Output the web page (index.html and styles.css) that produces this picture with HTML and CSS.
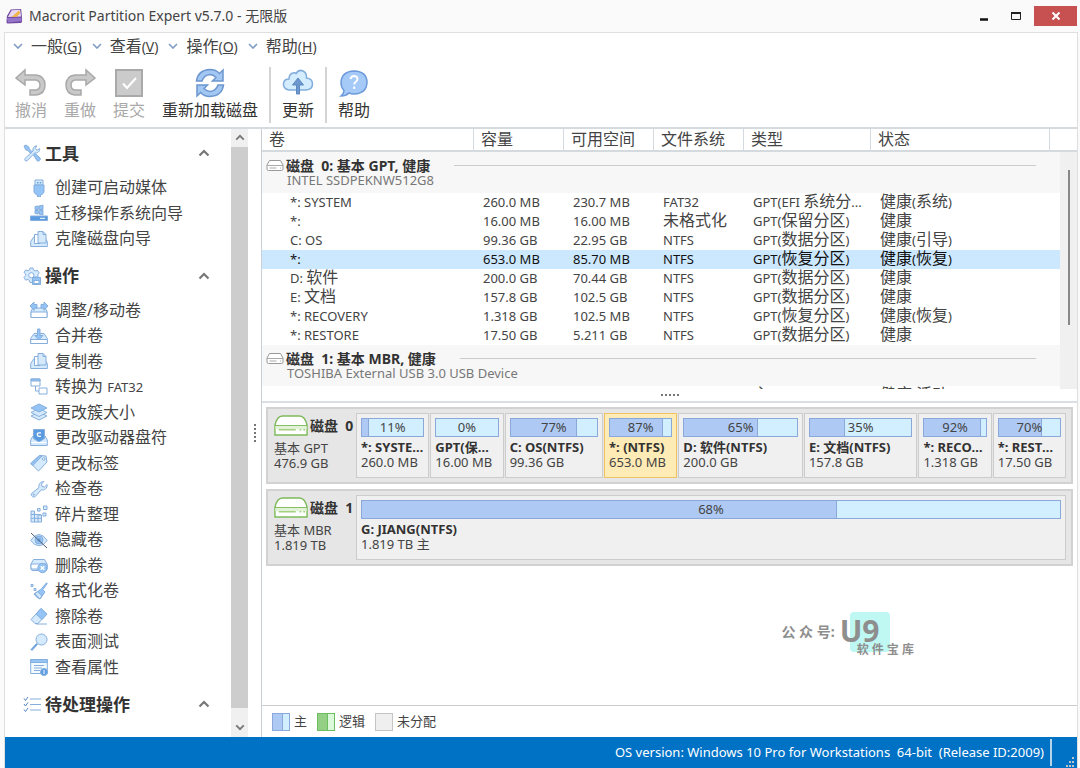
FILE: index.html
```
<!DOCTYPE html>
<html lang="zh-CN">

<head>
	<meta charset="UTF-8">
	<meta name="viewport" content="width=device-width, initial-scale=1.0">
	<title>Macrorit Partition Expert v5.7.0 - 无限版</title>
	<link rel="stylesheet" href="styles.css">
</head>

<body>
	<!-- icon sprite -->
	<svg class="sprite" aria-hidden="true">
		<symbol id="down" viewBox="0 0 10 6"><path d="M1 1l4 4 4-4" fill="none" stroke="currentColor" stroke-width="1.6"/></symbol>
		<symbol id="up" viewBox="0 0 12 8"><path d="M1.5 6.5L6 2l4.5 4.5" fill="none" stroke="currentColor" stroke-width="2.2"/></symbol>
		<symbol id="tools" viewBox="0 0 18 18">
			<path d="M2 14.5L10 7c-.6-2.400.8-5 3.800-5.200l-1.600 2.600 1.800 1.800 2.700-1.500c.2 3-2.400 4.800-5 4.200l-7.500 7.800c-1.800.9-3-.5-2.200-2.200z"/>
			<path class="mid" d="M1 2l2-1 3 2.200.2 1.600 3 3-1.600 1.500-3-3-1.600-.2zM10.500 11l1.600-1.500 5 4.500c1 1.800-1.300 3.900-3 2.800z"/>
		</symbol>
		<symbol id="gear" viewBox="0 0 18 18">
			<path d="M7 1h3l.6 2.200 1.500.8 2.200-.8 1.900 2.700-1.300 1.800.1 2.300H11l-.5 5.300-3.500.2-.6-2.100-1.500-.9-2.300.6L1 10.400l1.600-1.800-.1-1.600L1 5.600 2.600 3l2.300.7L6.400 3z"/>
			<circle cx="8.300" cy="8.300" r="2.600" fill="#fff"/>
			<path class="mid" d="M9.500 10.500h8v7h-8z"/><path d="M11 13.500h5v3h-5z" fill="#fff"/>
		</symbol>
		<symbol id="todo" viewBox="0 0 18 18">
			<path class="line" d="M7 4h11M7 9.500h11M7 15h11"/>
			<path d="M1 3.500L2.500 5.500 5 2M1 9l1.500 2L5 7.500M1 14.500l1.500 2L5 13" fill="none" stroke="#4f84c4"/>
		</symbol>
		<symbol id="usb" viewBox="0 0 18 18">
			<path d="M5 1h8v5H5z"/><path class="dark" d="M7 3h1.500v1.500H7zM9.700 3h1.500v1.500H9.700z" stroke="none"/>
			<path class="mid" d="M4 6h10v7q-1 2.500-3.500 3.200V18h-3v-1.800Q5 15.500 4 13z"/>
		</symbol>
		<symbol id="migrate" viewBox="0 0 18 18">
			<path class="mid" d="M5 2.500l3.300-.5v3.500H5zM9.300 1.800L13 1.200v4.300H9.300zM5 6.500h3.300V10L5 9.500zM9.300 6.500H13v4.300l-3.700-.6z"/>
			<path class="dark" d="M.5 12h17v4.500H.5z"/><path d="M10 14.300h5" stroke="#fff"/>
		</symbol>
		<symbol id="copy" viewBox="0 0 18 18">
			<path d="M.7 16.500v-5L4 6.500h10l3.300 5v5z"/>
			<path d="M4.500 4.500h5.500v9H4.500z" fill="#fff"/>
			<path d="M8 1.500h5l3 3v8.500H8z"/><path class="line" d="M13 1.500v3h3"/>
		</symbol>
		<symbol id="resize" viewBox="0 0 18 18">
			<path d="M1 16.500V10l2-3h12l2 3v6.500z"/><path d="M1 11h16v5.500H1z" fill="#fff"/>
			<path class="mid" d="M0 5l4-4v2.500h3V7H4v2.500zM18 5l-4-4v2.500h-3V7h3v2.500z"/>
		</symbol>
		<symbol id="merge" viewBox="0 0 18 18">
			<path d="M.7 16.500v-5L4 6.500h10l3.300 5v5z"/><path d="M.7 12.500h16.600v4H.7z" fill="#fff"/>
			<path class="mid" d="M7.500 2h2.500v6.500h3L8.800 13 4.500 8.500h3z"/>
		</symbol>
		<symbol id="convert" viewBox="0 0 18 18">
			<path d="M1 1h9v7H1z" fill="#fff"/><path class="mid" d="M1 1h9v2H1z"/>
			<path class="line" d="M5.500 8v5H9"/><path d="M9 10h8v6H9z" fill="#fff"/>
		</symbol>
		<symbol id="layers" viewBox="0 0 18 18">
			<path d="M1 13l8-4 8 4-8 4z"/><path d="M1 9.500l8-4 8 4-8 4z"/>
			<path class="mid" d="M1 5l8-4 8 4-8 4z"/>
		</symbol>
		<symbol id="letter" viewBox="0 0 18 18">
			<path d="M.7 16.500V11L3 7h12l2.300 4v5.500z"/><path class="dark" d="M3.500.5h11v9L9 13 3.500 9.500z"/>
			<path d="M11 3.800H9q-1.700 0-1.700 1.700T9 7.300h2" fill="none" stroke="#fff" stroke-width="1.300"/>
			<path d="M1 13.500h16" stroke="#fff"/>
		</symbol>
		<symbol id="tag" viewBox="0 0 18 18">
			<path d="M9.500 1.500l6.500.5 1 6-8.500 9L.8 9.500z"/><path class="mid" d="M9.500 1.500L.8 9.500l2 2L12 2z"/>
			<circle cx="13.700" cy="5" r="1.300" fill="#fff"/>
		</symbol>
		<symbol id="wrench" viewBox="0 0 18 18">
			<path d="M1.500 13.500L9 7.500c-.7-3 1.300-6 4.800-6L11.500 4l.5 2.500 2.500.5 2.600-2.500c.5 3.500-2.600 6.200-5.800 5.300l-6.300 7c-2.300 1-4.600-1.300-3.500-3.300z"/>
			<circle cx="3.700" cy="14.600" r=".7" fill="#fff"/>
		</symbol>
		<symbol id="defrag" viewBox="0 0 18 18">
			<path d="M1 6h3.500v3.500H8V10h3.500v7H1zM1 9.500h10M1 13.300h10.500M4.500 7v10M8 9v8"/>
			<path d="M7.500 3.500h2.600v2.600H7.500zM13.500 1h3.500v3.500h-3.500zM13 8h3v3h-3z"/>
		</symbol>
		<symbol id="hide" viewBox="0 0 18 18">
			<path d="M.7 9.500Q9-2.500 17.300 9.500 9 20 .7 9.500z"/><circle class="mid" cx="9" cy="9" r="4"/>
			<circle class="dark" cx="9" cy="9" r="1.500"/>
			<path d="M1 2l16 15" stroke="#4b5d78"/>
		</symbol>
		<symbol id="delete" viewBox="0 0 18 18">
			<path d="M1 13V8l2.500-4.500h11L17 8v5q-1 1.500-3 1.500H3Q1 14.500 1 13z"/>
			<path d="M1 8h16v5H1z" fill="#fff"/>
			<circle class="mid" cx="12.500" cy="12" r="4.700"/><path d="M10.700 10.200l3.600 3.600M14.300 10.200l-3.600 3.600" stroke="#fff" stroke-width="1.400"/>
		</symbol>
		<symbol id="broom" viewBox="0 0 18 18">
			<path class="mid" d="M16.500.8l.8.8-4.500 6L15 10l-5 7q-3.500-1-6-5l6.500-4.500 1.200-1z"/>
			<path d="M5 11.700l4.500 4.800L12 14 7.500 9.800z"/>
			<path d="M1 2.500h2v2H1zM4 6.500h2v2H4z"/>
		</symbol>
		<symbol id="eraser" viewBox="0 0 18 18">
			<path d="M1 12.500L11 1.500l6 5.500-9 9.500H5z"/><path class="mid" d="M6 7l5-5.500 6 5.500-5 5.500z"/>
			<path class="line" d="M6 17h11"/>
		</symbol>
		<symbol id="search" viewBox="0 0 18 18">
			<path class="dark" d="M1 16.500L6.500 10.500l1 1L2 17.500z"/><circle cx="11.500" cy="6.500" r="5.500"/>
		</symbol>
		<symbol id="props" viewBox="0 0 18 18">
			<path d="M.7 1.500h16.600v14H.7z" fill="#f2f9ff"/><path class="mid" d="M.7 1.500h16.600v3H.7z"/>
			<path class="line" d="M4 7.500h10M4 10h8M4 12.500h6"/><circle class="dark" cx="14" cy="14" r="3.500"/><path d="M14 12v4" stroke="#fff"/>
		</symbol>
		<symbol id="hdd" viewBox="0 0 18 12">
			<path d="M1 6l2.500-4.500h11L17 6v4q0 1.500-1.500 1.500h-13Q1 11.500 1 10z" fill="#fff" stroke="#999"/>
			<path d="M1 6.500h16M3.500 9h7M14 9h1" stroke="#aaa" fill="none"/>
		</symbol>
		<symbol id="disk" viewBox="0 0 36 22">
			<path d="M1 11Q3 1 9 1h18q6 0 8 10v10H1z" fill="#fff" stroke="#7dba5a" stroke-width="1.500"/>
			<path d="M1.500 11h33v4h-33z" fill="#e2f2d6"/><path d="M1 11h34" stroke="#7dba5a"/>
			<path d="M5 15.500h18M27 15.500h2M31 15.500h2" stroke="#a5d080" stroke-width="1.500"/>
		</symbol>
	</svg>

	<header class="titlebar">
		<svg class="logo" viewBox="0 0 18 16">
			<path d="M1 8L5 1l11-.5L17 10v4q-.5 1.500-2 1.500L2 16q-1.500 0-1.500-2z" fill="#70479f"/>
			<path d="M2 9L6 2l9-.5 1 7z" fill="#e9d7ee"/><path d="M6 9l8-7 1 3-4 4z" fill="#f0b44b"/>
			<path d="M1 10l15.500-.5v4L2 15z" fill="#9575c9"/>
		</svg>
		<h1>Macrorit Partition Expert v5.7.0 - 无限版</h1>
		<div class="window-buttons">
			<button aria-label="最小化"><svg width="10" height="12"><path d="M1 9.500h8" stroke="#111" stroke-width="2.500"/></svg></button>
			<button aria-label="最大化"><svg width="12" height="12"><path d="M1.500 2.500h9v7h-9z" fill="none" stroke="#222"/><path d="M1 3h10" stroke="#222" stroke-width="2"/></svg></button>
			<button class="close" aria-label="关闭"><svg width="10" height="10"><path d="M1.500 1.500l7 7M8.500 1.500l-7 7" stroke="#fff" stroke-width="2"/></svg></button>
		</div>
	</header>

	<div class="window">
		<nav class="menu">
			<button><svg><use href="#down"/></svg><span><b>一般</b>(<u>G</u>)</span></button>
			<button><svg><use href="#down"/></svg><span><b>查看</b>(<u>V</u>)</span></button>
			<button><svg><use href="#down"/></svg><span><b>操作</b>(<u>O</u>)</span></button>
			<button><svg><use href="#down"/></svg><span><b>帮助</b>(<u>H</u>)</span></button>
		</nav>

		<div class="toolbar">
			<button disabled>
				<svg viewBox="0 0 32 32"><path d="M1 11L10 3v5h11q9 1 9 10 0 9-9 10h-6v-5h6q4-.5 4-5 0-4-4-5H10v5z" fill="#c9c9c9" stroke="#a9a9a9" stroke-width="1.500"/></svg>
				撤消
			</button>
			<button disabled>
				<svg viewBox="0 0 32 32"><path d="M31 11L22 3v5H11q-9 1-9 10 0 9 9 10h6v-5h-6q-4-.5-4-5 0-4 4-5h11v5z" fill="#c9c9c9" stroke="#a9a9a9" stroke-width="1.500"/></svg>
				重做
			</button>
			<button disabled>
				<svg viewBox="0 0 32 32"><path d="M3 3h26v26H3z" fill="#cbcbcb" stroke="#a9a9a9" stroke-width="2"/><path d="M10 16.500l4 4.500 9-10" fill="none" stroke="#fff" stroke-width="2"/></svg>
				提交
			</button>
			<button>
				<svg viewBox="0 0 32 32"><path d="M2.500 14Q4 3 16 2.500q6 0 9.500 4L29 3v11H18.500l3.500-3.500q-3-3-6-3-6 .5-8 6.500zM29.500 18Q28 29 16 29.500q-6 0-9.500-4L3 29V18h10.500L10 21.500q3 3 6 3 6-.5 8-6.500z" fill="#a3c7f3" stroke="#6c96cf" stroke-width="1.500"/></svg>
				重新加载磁盘
			</button>
			<hr>
			<button>
				<svg viewBox="0 0 32 32"><path d="M7 23Q1 22 1.500 16.500 2 12 7 12q0-5 4-6 2-.5 3 .5Q17 2 21 4q4 2 3.500 7 6 .5 6 6T24 23z" fill="#d3edff" stroke="#82acdb" stroke-width="1.500"/><path d="M16 11l5.500 7h-4v9h-3v-9h-4z" fill="#6d97cf" stroke="#5d87bf"/></svg>
				更新
			</button>
			<hr>
			<button>
				<svg viewBox="0 0 32 32"><path d="M16 4q13 .5 13 11.500-.5 11-13 11.500-3 0-5-1-3 3-8 3 3-2.500 3-5.500-3-3-3-8Q3.500 4.500 16 4z" fill="#a5caf7" stroke="#6c9ada" stroke-width="1.500"/><path d="M12.500 12q.5-3 3.700-3 3.300.3 3.300 3 0 1.800-2 3-1.300.8-1.300 2.500M16.200 19.500v2.500" fill="none" stroke="#fff" stroke-width="2"/></svg>
				帮助
			</button>
		</div>

		<main>
			<aside class="side">
				<nav>
					<h2><svg class="ico"><use href="#tools"/></svg>工具<button aria-label="折叠工具"><svg><use href="#up"/></svg></button></h2>
					<ul class="short">
						<li><a href="#"><svg class="ico"><use href="#usb"/></svg>创建可启动媒体</a></li>
						<li><a href="#"><svg class="ico"><use href="#migrate"/></svg>迁移操作系统向导</a></li>
						<li><a href="#"><svg class="ico"><use href="#copy"/></svg>克隆磁盘向导</a></li>
					</ul>
					<h2><svg class="ico"><use href="#gear"/></svg>操作<button aria-label="折叠操作"><svg><use href="#up"/></svg></button></h2>
					<ul class="long">
						<li><a href="#"><svg class="ico"><use href="#resize"/></svg>调整/移动卷</a></li>
						<li><a href="#"><svg class="ico"><use href="#merge"/></svg>合并卷</a></li>
						<li><a href="#"><svg class="ico"><use href="#copy"/></svg>复制卷</a></li>
						<li><a href="#"><svg class="ico"><use href="#convert"/></svg><span>转换为 <small>FAT32</small></span></a></li>
						<li><a href="#"><svg class="ico"><use href="#layers"/></svg>更改簇大小</a></li>
						<li><a href="#"><svg class="ico"><use href="#letter"/></svg>更改驱动器盘符</a></li>
						<li><a href="#"><svg class="ico"><use href="#tag"/></svg>更改标签</a></li>
						<li><a href="#"><svg class="ico"><use href="#wrench"/></svg>检查卷</a></li>
						<li><a href="#"><svg class="ico"><use href="#defrag"/></svg>碎片整理</a></li>
						<li><a href="#"><svg class="ico"><use href="#hide"/></svg>隐藏卷</a></li>
						<li><a href="#"><svg class="ico"><use href="#delete"/></svg>删除卷</a></li>
						<li><a href="#"><svg class="ico"><use href="#broom"/></svg>格式化卷</a></li>
						<li><a href="#"><svg class="ico"><use href="#eraser"/></svg>擦除卷</a></li>
						<li><a href="#"><svg class="ico"><use href="#search"/></svg>表面测试</a></li>
						<li><a href="#"><svg class="ico"><use href="#props"/></svg>查看属性</a></li>
					</ul>
					<h2><svg class="ico"><use href="#todo"/></svg>待处理操作<button aria-label="折叠待处理操作"><svg><use href="#up"/></svg></button></h2>
				</nav>
				<div class="scroll">
					<svg><use href="#up"/></svg>
					<div class="thumb"></div>
					<svg class="flip"><use href="#up"/></svg>
				</div>
				<div class="grip"><i></i><i></i><i></i><i></i><i></i></div>
			</aside>

			<section class="content">
				<div class="volumes">
					<table>
						<colgroup>
							<col class="c-name"><col class="c-size"><col class="c-size"><col class="c-size"><col class="c-type"><col class="c-state"><col class="c-rest">
						</colgroup>
						<thead>
							<tr><th>卷</th><th>容量</th><th>可用空间</th><th>文件系统</th><th>类型</th><th>状态</th><th></th></tr>
						</thead>
						<tbody>
							<tr class="disk-row">
								<td colspan="7"><div class="disk-title"><svg><use href="#hdd"/></svg><strong>磁盘 &nbsp;0: 基本 GPT, 健康</strong><hr></div><p>INTEL SSDPEKNW512G8</p></td>
							</tr>
							<tr><td>*: SYSTEM</td><td>260.0 MB</td><td>230.7 MB</td><td>FAT32</td><td>GPT(EFI <b>系统分</b>...</td><td><b>健康</b>(<b>系统</b>)</td><td></td></tr>
							<tr><td>*:</td><td>16.00 MB</td><td>16.00 MB</td><td><b>未格式化</b></td><td>GPT(<b>保留分区</b>)</td><td><b>健康</b></td><td></td></tr>
							<tr><td>C: OS</td><td>99.36 GB</td><td>22.95 GB</td><td>NTFS</td><td>GPT(<b>数据分区</b>)</td><td><b>健康</b>(<b>引导</b>)</td><td></td></tr>
							<tr class="selected"><td>*:</td><td>653.0 MB</td><td>85.70 MB</td><td>NTFS</td><td>GPT(<b>恢复分区</b>)</td><td><b>健康</b>(<b>恢复</b>)</td><td></td></tr>
							<tr><td>D: <b>软件</b></td><td>200.0 GB</td><td>70.44 GB</td><td>NTFS</td><td>GPT(<b>数据分区</b>)</td><td><b>健康</b></td><td></td></tr>
							<tr><td>E: <b>文档</b></td><td>157.8 GB</td><td>102.5 GB</td><td>NTFS</td><td>GPT(<b>数据分区</b>)</td><td><b>健康</b></td><td></td></tr>
							<tr><td>*: RECOVERY</td><td>1.318 GB</td><td>102.5 MB</td><td>NTFS</td><td>GPT(<b>恢复分区</b>)</td><td><b>健康</b>(<b>恢复</b>)</td><td></td></tr>
							<tr><td>*: RESTORE</td><td>17.50 GB</td><td>5.211 GB</td><td>NTFS</td><td>GPT(<b>数据分区</b>)</td><td><b>健康</b></td><td></td></tr>
							<tr class="disk-row">
								<td colspan="7"><div class="disk-title"><svg><use href="#hdd"/></svg><strong>磁盘 &nbsp;1: 基本 MBR, 健康</strong><hr></div><p>TOSHIBA External USB 3.0 USB Device</p></td>
							</tr>
							<tr><td></td><td></td><td></td><td></td><td><b>主</b></td><td><b>健康</b>(<b>活动</b>)</td><td></td></tr>
						</tbody>
					</table>
					<div class="vscroll"><div class="corner"></div><div class="track"></div></div>
				</div>

				<div class="splitter"><i></i><i></i><i></i><i></i><i></i></div>

				<div class="map">
					<article class="disk">
						<div class="disk-info">
							<div class="disk-name"><svg><use href="#disk"/></svg><strong>磁盘 &nbsp;0</strong></div>
							<p>基本 GPT</p>
							<p>476.9 GB</p>
						</div>
						<div class="parts">
							<div class="part" style="flex-grow: 63"><div class="bar"><i style="width: 11%"></i><span>11%</span></div><strong>*: SYSTEM(FAT32)</strong><p>260.0 MB</p></div>
							<div class="part" style="flex-grow: 63"><div class="bar"><i style="width: 0%"></i><span>0%</span></div><strong>GPT(保留分区)</strong><p>16.00 MB</p></div>
							<div class="part" style="flex-grow: 88"><div class="bar"><i style="width: 77%"></i><span>77%</span></div><strong>C: OS(NTFS)</strong><p>99.36 GB</p></div>
							<div class="part active" style="flex-grow: 63"><div class="bar"><i style="width: 87%"></i><span>87%</span></div><strong>*: (NTFS)</strong><p>653.0 MB</p></div>
							<div class="part" style="flex-grow: 114"><div class="bar"><i style="width: 65%"></i><span>65%</span></div><strong>D: 软件(NTFS)</strong><p>200.0 GB</p></div>
							<div class="part" style="flex-grow: 103"><div class="bar"><i style="width: 35%"></i><span>35%</span></div><strong>E: 文档(NTFS)</strong><p>157.8 GB</p></div>
							<div class="part" style="flex-grow: 63"><div class="bar"><i style="width: 92%"></i><span>92%</span></div><strong>*: RECOVERY(NTFS)</strong><p>1.318 GB</p></div>
							<div class="part" style="flex-grow: 63"><div class="bar"><i style="width: 70%"></i><span>70%</span></div><strong>*: RESTORE(NTFS)</strong><p>17.50 GB</p></div>
						</div>
					</article>
					<article class="disk">
						<div class="disk-info">
							<div class="disk-name"><svg><use href="#disk"/></svg><strong>磁盘 &nbsp;1</strong></div>
							<p>基本 MBR</p>
							<p>1.819 TB</p>
						</div>
						<div class="parts">
							<div class="part" style="flex-grow: 1"><div class="bar"><i style="width: 68%"></i><span>68%</span></div><strong>G: JIANG(NTFS)</strong><p>1.819 TB 主</p></div>
						</div>
					</article>
					<div class="mark">
						<span class="mark-pre">公 众 号:</span>
						<span class="mark-logo">U9</span>
						<span class="mark-sub">软 件 宝 库</span>
					</div>
				</div>

				<ul class="legend">
					<li><i class="primary"></i>主</li>
					<li><i class="logical"></i>逻辑</li>
					<li><i class="free"></i>未分配</li>
				</ul>
			</section>
		</main>

		<footer>
			<span>OS version: Windows 10 Pro for Workstations  64-bit  (Release ID:2009)</span>
			<svg width="10" height="10"><path d="M7 0h2v2H7zM7 4h2v2H7zM7 8h2v2H7zM4 4h2v2H4zM4 8h2v2H4zM1 8h2v2H1z" fill="#b9c4cc"/></svg>
		</footer>
	</div>
</body>

</html>
```
FILE: styles.css
```
* {
	box-sizing: border-box;
}

body {
	margin: 0;
	min-height: 100vh;
	display: flex;
	flex-direction: column;
	background: #fafafa;
	color: #444;
	font: 13px/15px "Noto Sans", "Noto Sans CJK SC", sans-serif;
	user-select: none;
}

h1, h2, p, ul {
	margin: 0;
	padding: 0;
	font-weight: normal;
}

ul {
	list-style: none;
}

button {
	border: 0;
	padding: 0;
	background: none;
	font: inherit;
	color: inherit;
}

svg {
	display: block;
	flex: none;
}

hr {
	border: 0;
	margin: 0;
}

/* larger CJK runs inside latin text */
b {
	font-size: 16px;
	font-weight: normal;
}

.sprite {
	position: absolute;
	width: 0;
	height: 0;
}

/* title bar */
.titlebar {
	height: 32px;
	display: flex;
	align-items: center;
	padding: 0 3px 0 6px;
}

.logo {
	width: 17px;
	height: 16px;
	margin-right: 6px;
}

h1 {
	flex: 1;
	padding-bottom: 2px;
	font-size: 14px;
}

.window-buttons {
	display: flex;
	height: 20px;
}

.window-buttons button {
	width: 32px;
	display: grid;
	place-items: center;
}

.window-buttons .close {
	width: 43px;
	margin-left: 2px;
	background: #c75050;
}

.window {
	flex: 1;
	display: flex;
	flex-direction: column;
	margin: 0 2px 0 4px;
	border: 1px solid #dfdfdf;
	border-bottom: 0;
	background: #fff;
}

/* menu and toolbar */
.menu {
	display: flex;
	gap: 10px;
	height: 28px;
	padding: 0 0 2px 8px;
	font-size: 14px;
}

.menu button {
	display: flex;
	align-items: center;
	gap: 8px;
}

.menu svg {
	width: 10px;
	height: 6px;
	color: #7f9cc4;
}

.toolbar {
	display: flex;
	align-items: flex-start;
	gap: 1px;
	height: 68px;
	padding: 6px 0 0 2px;
	border-bottom: 2px solid #d5dade;
}

.toolbar button {
	padding: 0 8px;
	font-size: 16px;
	line-height: 22px;
	color: #333;
}

.toolbar button:disabled {
	color: #a8a8a8;
}

.toolbar svg {
	width: 32px;
	height: 32px;
	margin: 0 auto;
}

.toolbar hr {
	width: 2px;
	height: 56px;
	margin: 0 2px;
	background: #d4d4d4;
}

main {
	flex: 1;
	display: flex;
}

/* left side */
.side {
	width: 257px;
	display: flex;
	border-right: 1px solid #c9cfd6;
}

.side nav {
	flex: 1;
	display: flex;
	flex-direction: column;
	padding-bottom: 11px;
	font-size: 16px;
	color: #444;
}

.side h2 {
	height: 46px;
	display: flex;
	align-items: center;
	gap: 4px;
	padding: 2px 21px 0 18px;
	font-size: 17px;
	font-weight: bold;
	color: #333;
}

.side h2 button {
	margin-left: auto;
	color: #777;
}

.side h2 button svg {
	width: 12px;
	height: 8px;
}

.side ul {
	display: grid;
	grid-auto-rows: 1fr;
}

.short {
	flex: 3 1 0;
}

.long {
	flex: 15 1 0;
}

.side a {
	height: 100%;
	display: flex;
	align-items: center;
	gap: 7px;
	padding-left: 25px;
	color: inherit;
	text-decoration: none;
}

small {
	font-size: 13px;
}

.ico {
	width: 18px;
	height: 18px;
	fill: #d5ebfd;
	stroke: #86aedd;
	stroke-width: 1px;
}

.mid {
	fill: #94c4f6;
}

.dark {
	fill: #5b9be2;
}

.line {
	fill: none;
}

.scroll {
	width: 17px;
	display: flex;
	flex-direction: column;
	align-items: center;
	background: #f0f0f0;
	color: #777;
}

.scroll svg {
	width: 10px;
	height: 7px;
	margin: 5px 0 6px;
}

.scroll .flip {
	margin: 16px 0 6px;
	transform: rotate(180deg);
}

.thumb {
	flex: 1;
	width: 100%;
	background: #cdcdcd;
}

.grip {
	width: 13px;
	display: flex;
	flex-direction: column;
	align-items: center;
	justify-content: center;
	gap: 2px;
}

.grip i,
.splitter i {
	width: 2px;
	height: 2px;
	background: #777;
}

.content {
	flex: 1;
	min-width: 0;
	display: flex;
	flex-direction: column;
}

/* volume list */
.volumes {
	display: flex;
	height: 260px;
	overflow: hidden;
}

table {
	flex: 1;
	width: 0;
	height: min-content;
	table-layout: fixed;
	border-collapse: separate;
	border-spacing: 0;
}

.c-name {
	width: 212px;
}

.c-size {
	width: 90px;
}

.c-type {
	width: 127px;
}

.c-rest {
	width: 10px;
}

th {
	height: 23px;
	padding: 0 0 0 7px;
	border-right: 1px solid #d5dae0;
	border-bottom: 2px solid #d5dade;
	font-size: 16px;
	font-weight: normal;
	text-align: left;
}

th:last-child {
	border-right: 0;
}

td {
	height: 19px;
	padding: 0 0 0 9px;
	line-height: 19px;
	white-space: nowrap;
}

td b {
	line-height: 16px;
}

td:first-child {
	padding-left: 28px;
}

.selected {
	background: #cce8ff;
	color: #111;
}

.disk-row td {
	height: 41px;
	padding: 0 24px 0 4px;
	background: #f7f7f7;
	line-height: 15px;
}

.disk-row p {
	padding-left: 21px;
	color: #777;
}

.disk-title {
	display: flex;
	align-items: center;
	font-size: 14px;
	color: #333;
}

.disk-title svg {
	width: 18px;
	height: 12px;
	margin-right: 2px;
}

.disk-title hr {
	flex: 1;
	height: 1px;
	margin-left: 24px;
	background: #ccc;
}

.vscroll {
	width: 17px;
	display: flex;
	flex-direction: column;
	background: #f0f0f0;
}

.corner {
	height: 23px;
	border-bottom: 2px solid #d5dade;
	background: #fff;
}

.track {
	width: 2px;
	height: 155px;
	margin: 18px auto 0;
	background: #888;
}

.splitter {
	height: 14px;
	display: flex;
	align-items: center;
	justify-content: center;
	gap: 2px;
	border-bottom: 2px solid #d9dfe4;
}

/* disk map */
.map {
	flex: 1;
	position: relative;
	display: flex;
	flex-direction: column;
	gap: 5px;
	padding: 4px 4px 0;
}

.disk {
	display: flex;
	padding: 4px 5px 4px 5px;
	border: 2px solid #d2d2d2;
	background: #e6e6e6;
}

.disk-info {
	width: 83px;
	padding-left: 1px;
	white-space: nowrap;
}

.disk-name {
	display: flex;
	align-items: center;
	gap: 2px;
	height: 24px;
	margin-bottom: 4px;
	font-size: 14px;
	color: #333;
}

.disk-name svg {
	width: 34px;
	height: 21px;
}

.parts {
	flex: 1;
	min-width: 0;
	display: flex;
	gap: 1px;
}

.part {
	flex: 1 1 0;
	min-width: 0;
	height: 65px;
	padding: 4px;
	border: 1px solid #ccc;
	background: #f0f0f0;
}

.active {
	border-color: #efc264;
	background: #ffebb5;
}

.part strong {
	display: block;
	margin-top: 3px;
	overflow: hidden;
	text-overflow: ellipsis;
	white-space: nowrap;
	color: #333;
}

.bar {
	display: grid;
	height: 19px;
	border: 1px solid #8aa9da;
	background: #d2efff;
	line-height: 17px;
	text-align: center;
}

.bar i {
	grid-area: 1 / 1;
	border-right: 1px solid #8aa9da;
	background: #aecaf4;
}

.bar i[style="width: 0%"] {
	border: 0;
}

.bar span {
	grid-area: 1 / 1;
}

.mark {
	position: absolute;
	right: 163px;
	bottom: 48px;
	display: grid;
	grid-template-columns: auto auto auto;
	align-items: center;
	color: #8e8e8e;
	font-weight: bold;
}

.mark::before {
	content: "";
	position: absolute;
	z-index: -1;
	right: 24px;
	top: 0;
	width: 40px;
	height: 40px;
	border-radius: 4px;
	background: #bff8f3;
}

.map,
.mark {
	z-index: 0;
}

.mark-pre {
	padding-right: 5px;
	font-size: 14px;
}

.mark-logo {
	font-size: 30px;
	line-height: 38px;
}

.mark-sub {
	grid-column: 2 / 4;
	grid-row: 2;
	margin: -8px 0 0 17px;
	font-size: 12px;
}

.legend {
	display: flex;
	align-items: center;
	gap: 10px;
	height: 32px;
	padding-left: 10px;
	border-top: 1px solid #ccc;
}

.legend li {
	display: flex;
	align-items: center;
	gap: 4px;
}

.legend i {
	width: 18px;
	height: 18px;
	border: 1px solid #8aa9da;
}

.primary {
	background: linear-gradient(90deg, #aecaf4 9px, #8aa9da 9px, #8aa9da 10px, #d2efff 10px);
}

.legend .logical {
	border-color: #6bbf5f;
	background: linear-gradient(90deg, #93d086 9px, #6bbf5f 9px, #6bbf5f 10px, #dcfadb 10px);
}

.legend .free {
	border-color: #c4c4c4;
	background: #efefef;
}

footer {
	height: 31px;
	display: flex;
	align-items: center;
	justify-content: flex-end;
	background: #0072c6;
	color: #fff;
}

footer span {
	padding: 6px 6px;
	border-right: 2px solid #b5d4ea;
	white-space: pre;
}

footer svg {
	align-self: flex-end;
	margin: 0 2px 1px 13px;
}
```
